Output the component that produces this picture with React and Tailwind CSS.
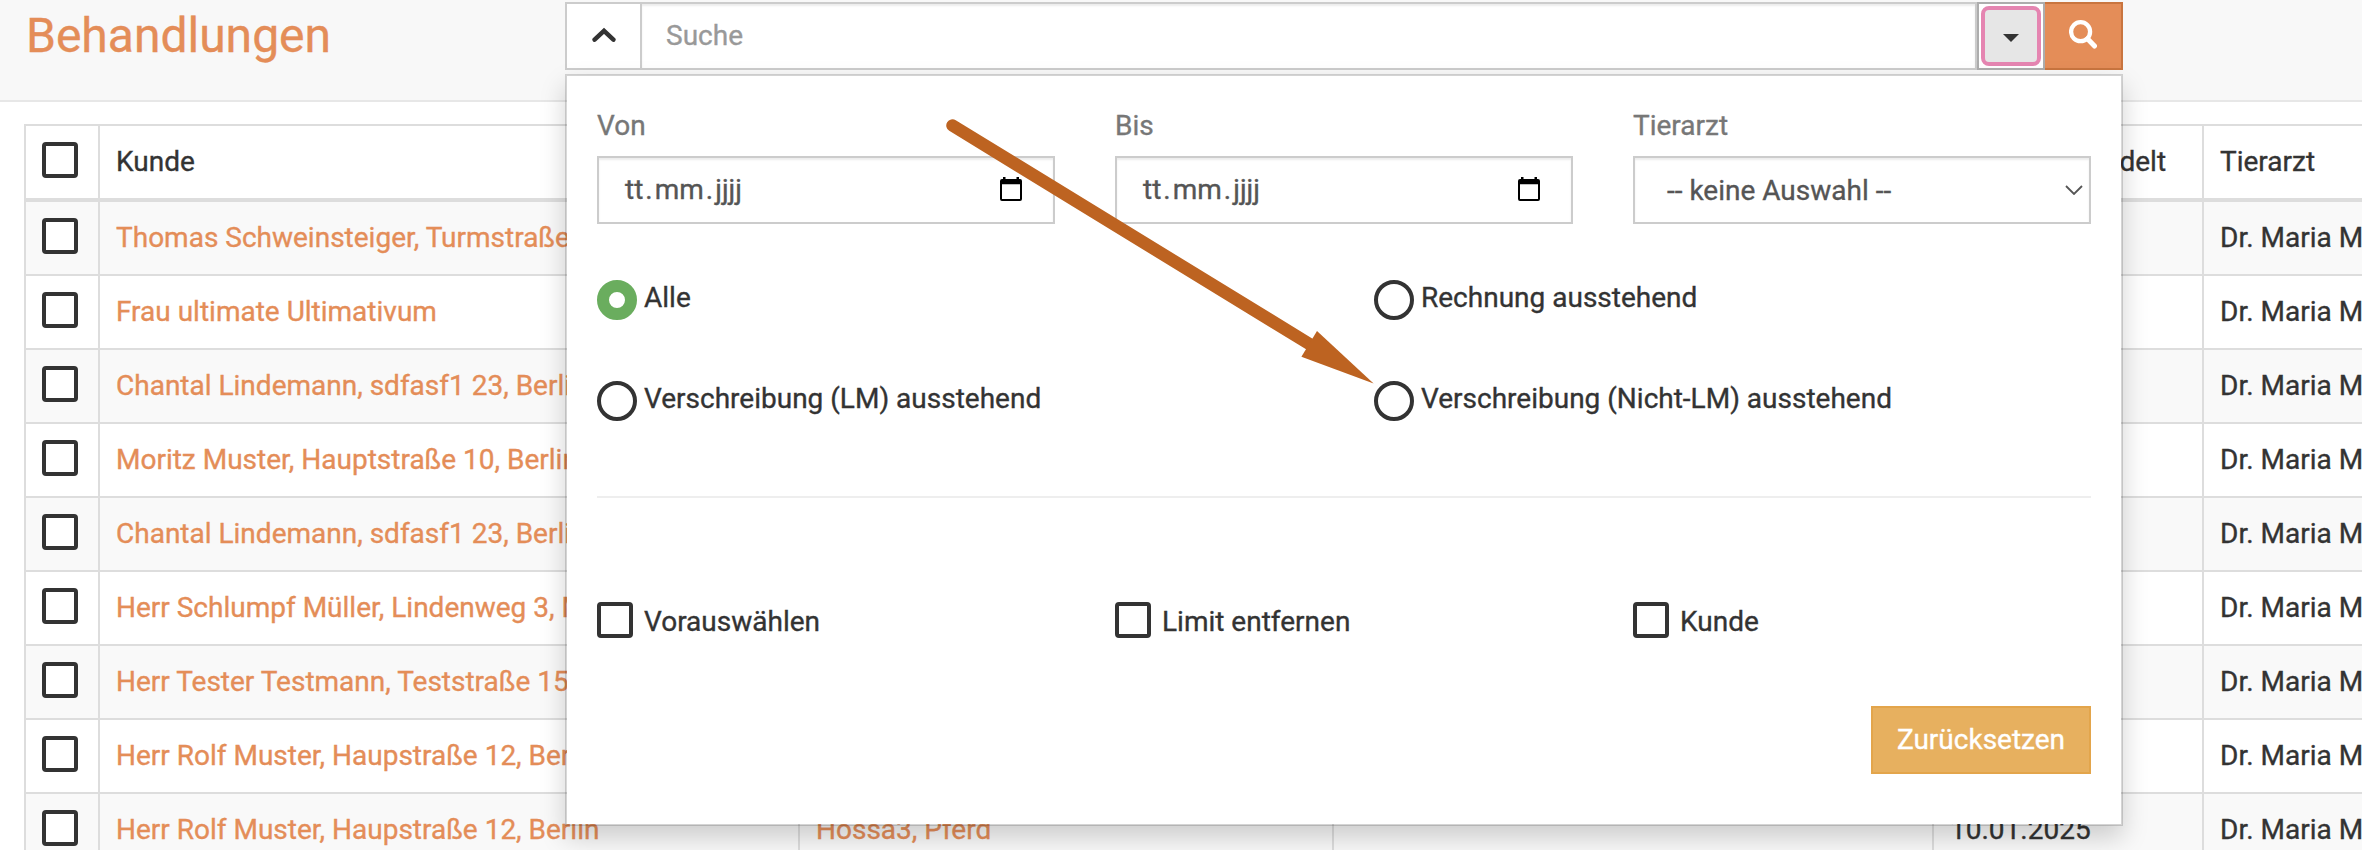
const rows = [
  'Thomas Schweinsteiger, Turmstraße 12, Berlin',
  'Frau ultimate Ultimativum',
  'Chantal Lindemann, sdfasf1 23, Berlin',
  'Moritz Muster, Hauptstraße 10, Berlin',
  'Chantal Lindemann, sdfasf1 23, Berlin',
  'Herr Schlumpf Müller, Lindenweg 3, München',
  'Herr Tester Testmann, Teststraße 15, Berlin',
  'Herr Rolf Muster, Haupstraße 12, Berlin',
  'Herr Rolf Muster, Haupstraße 12, Berlin',
]

const grid = 'grid grid-cols-[74px_700px_534px_600px_270px_400px]'
const cell = 'h-full border-r-2 border-[#ddd] px-4 py-4 whitespace-nowrap overflow-hidden'

function Box() {
  return <span className="block size-9 shrink-0 rounded-[4px] border-4 border-[#333] bg-white" />
}

function Row({ name, striped, last }) {
  return (
    <div className={`${grid} h-[74px] border-b-2 border-[#ddd] ${striped ? 'bg-[#f9f9f9]' : 'bg-white'}`}>
      <div className={cell}><Box /></div>
      <div className={`${cell} text-[#e48d58]`}>{name}</div>
      <div className={`${cell} text-[#e48d58]`}>{last ? 'Hossa3, Pferd' : ''}</div>
      <div className={cell} />
      <div className={cell}>{last ? '10.01.2025' : ''}</div>
      <div className={cell}>Dr. Maria Muster</div>
    </div>
  )
}

function DateField({ label }) {
  return (
    <div className="flex flex-col">
      <span className="mb-[10px] text-[#777]">{label}</span>
      <div className="flex h-[68px] items-center border-2 border-[#ccc] bg-white pr-[31px] pl-[24px] text-[#555] shadow-[inset_0_2px_2px_rgba(0,0,0,0.075)]">
        <span className="px-0.5">tt</span>
        <span>.</span>
        <span className="px-0.5">mm</span>
        <span>.</span>
        <span className="px-0.5">jjjj</span>
        <svg className="mb-0.5 ml-auto h-6 w-[22px]" viewBox="0 0 22 24" fill="none">
          <path d="M3 0h2.500v2h11V0H19v2h1a2 2 0 0 1 2 2v18a2 2 0 0 1-2 2H2a2 2 0 0 1-2-2V4a2 2 0 0 1 2-2h1zM2 7.300v14.700h18V7.300z" fill="#000" fillRule="evenodd" />
        </svg>
      </div>
    </div>
  )
}

function Radio({ label, checked }) {
  return (
    <div className="flex h-10 gap-[7px]">
      <span className={`size-10 shrink-0 rounded-full ${checked ? 'border-[12px] border-[#6aad5e]' : 'border-4 border-[#333]'} bg-white`} />
      <span className="-mt-0.5 whitespace-nowrap">{label}</span>
    </div>
  )
}

function Check({ label }) {
  return (
    <div className="flex h-9 gap-[11px]">
      <Box />
      <span>{label}</span>
    </div>
  )
}

export default function App() {
  return (
    <div className="relative h-[850px] w-[2362px] overflow-hidden bg-white font-['Roboto',sans-serif] text-[28px] leading-[40px] text-[#333] [-webkit-text-stroke:0.35px]">
      <header className="flex h-[102px] border-b-2 border-[#e7e7e7] bg-[#f8f8f8] pt-0.5">
        <h1 className="w-[565px] pl-[26px] text-[48px] leading-[68px] text-[#e48d58]">Behandlungen</h1>
        <div className="flex h-[68px] w-[1558px]">
          <button className="flex w-[75px] items-center justify-center border-2 border-r-0 border-[#ccc] bg-white">
            <svg className="mb-0.5 h-4 w-6" viewBox="0 0 24 16" fill="none" stroke="#333" strokeWidth="4.500" strokeLinecap="round">
              <path d="M2.600 12.600 12 3.800l9.400 8.800" />
            </svg>
          </button>
          <div className="flex flex-1 items-center border-2 border-[#ccc] bg-white pl-6 text-[#999] shadow-[inset_0_2px_2px_rgba(0,0,0,0.075)]">Suche</div>
          <button className="flex w-[68px] border-2 border-[#adadad] bg-white p-0.5">
            <span className="flex size-full items-center justify-center rounded-[8px] border-4 border-[#e585b1] bg-[#e6e6e6]">
              <svg className="mt-1 h-2 w-4" viewBox="0 0 16 8"><path d="M0 0h16L8 8z" fill="#333" /></svg>
            </span>
          </button>
          <button className="flex w-[78px] items-center justify-center border-2 border-l-0 border-[#c9753f] bg-[#e48d58]">
            <svg className="mb-[3px] h-[29px] w-7" viewBox="0 0 28 29" fill="none" stroke="#fff">
              <circle cx="11.600" cy="11.700" r="9.500" strokeWidth="4.300" />
              <path d="m18.500 18.800 7 7.200" strokeWidth="5" strokeLinecap="round" />
            </svg>
          </button>
        </div>
      </header>

      <main className="pt-[22px] pl-6">
        <div className="w-[2700px] border-t-2 border-l-2 border-[#ddd]">
          <div className={`${grid} h-[76px] border-b-4 border-[#ddd]`}>
            <div className={cell}><Box /></div>
            <div className={cell}>Kunde</div>
            <div className={cell} />
            <div className={cell} />
            <div className={cell}>Zuletzt behandelt</div>
            <div className={cell}>Tierarzt</div>
          </div>
          {rows.map((name, i) => (
            <Row key={i} name={name} striped={i % 2 === 0} last={i === rows.length - 1} />
          ))}
        </div>
      </main>

      <section className="absolute top-[74px] left-[565px] h-[752px] w-[1558px] border-2 border-black/15 bg-white bg-clip-padding px-[30px] pt-[30px] shadow-[0_12px_24px_rgba(0,0,0,0.175)]">
        <div className="grid grid-cols-3 gap-[60px]">
          <DateField label="Von" />
          <DateField label="Bis" />
          <div className="flex flex-col">
            <span className="mb-[10px] text-[#777]">Tierarzt</span>
            <div className="flex h-[68px] items-center justify-between border-2 border-[#ccc] bg-white pr-[6px] pl-[32px] text-[#555] shadow-[inset_0_2px_2px_rgba(0,0,0,0.075)]">
              <span className="pt-px">-- keine Auswahl --</span>
              <svg className="h-[10px] w-[18px]" viewBox="0 0 18 10" fill="none" stroke="#555" strokeWidth="1.800">
                <path d="m1 1 8 8 8-8" />
              </svg>
            </div>
          </div>
        </div>
        <div className="mt-14 grid grid-cols-2 gap-x-[60px] gap-y-[61px]">
          <Radio label="Alle" checked />
          <Radio label="Rechnung ausstehend" />
          <Radio label="Verschreibung (LM) ausstehend" />
          <Radio label="Verschreibung (Nicht-LM) ausstehend" />
        </div>
        <div className="mt-[75px] h-0.5 bg-[#eee]" />
        <div className="mt-[104px] grid grid-cols-3 gap-[60px]">
          <Check label="Vorauswählen" />
          <Check label="Limit entfernen" />
          <Check label="Kunde" />
        </div>
        <div className="mt-[68px] flex justify-end">
          <button className="h-[68px] w-[220px] border-2 border-[#e3a54b] bg-[#e7b05f] text-white">Zurücksetzen</button>
        </div>
      </section>

      <svg className="absolute top-[110px] left-[940px] h-[280px] w-[440px]" viewBox="940 110 440 280">
        <path d="M952.500 125.500 1311 345" stroke="#bd6321" strokeWidth="12.500" strokeLinecap="round" />
        <path d="M1317 331 1373.600 383.500 1301.400 356.700z" fill="#bd6321" />
      </svg>
    </div>
  )
}
